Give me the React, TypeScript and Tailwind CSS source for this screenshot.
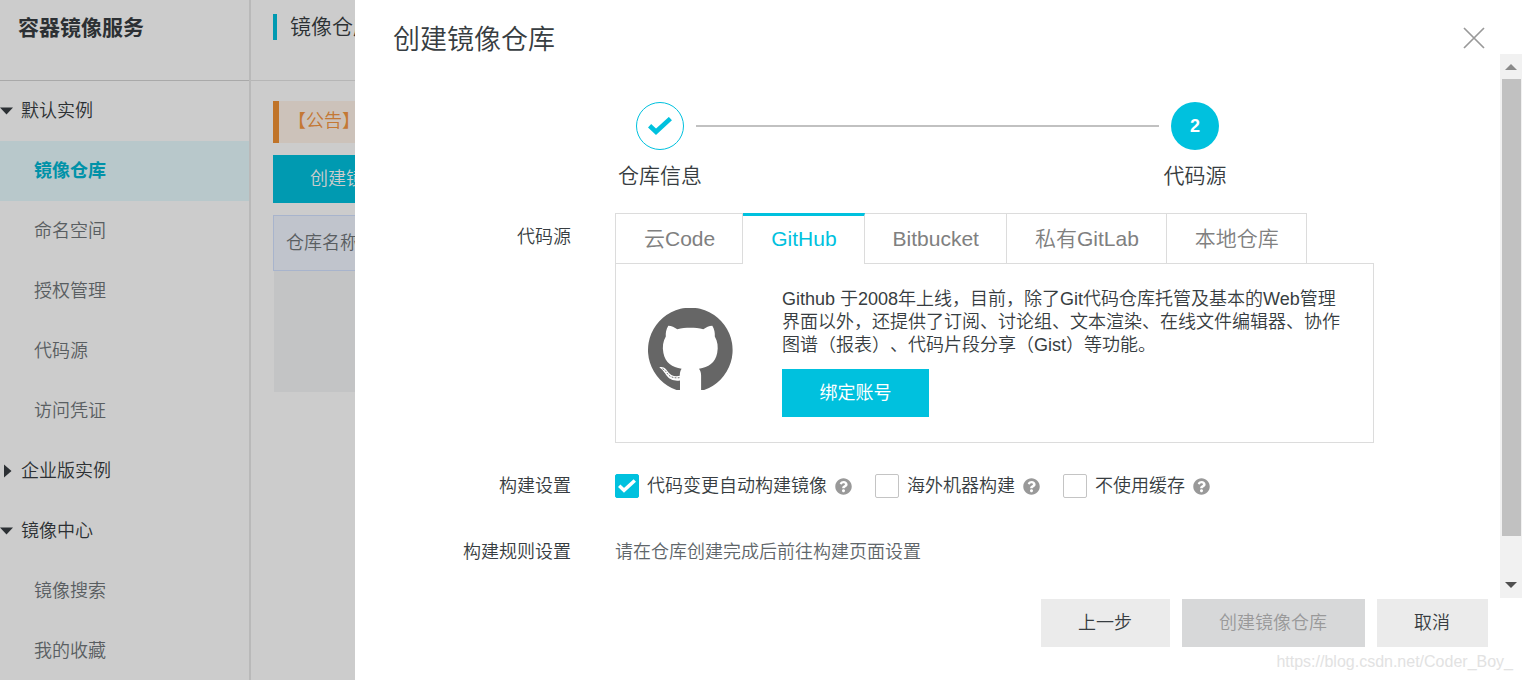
import { useState } from "react";
import type { ReactNode } from "react";
import { FaQuestionCircle } from "react-icons/fa";

type NavGroup = { title: string; open: boolean; items: string[] };

const navGroups: NavGroup[] = [
  { title: "默认实例", open: true, items: ["镜像仓库", "命名空间", "授权管理", "代码源", "访问凭证"] },
  { title: "企业版实例", open: false, items: [] },
  { title: "镜像中心", open: true, items: ["镜像搜索", "我的收藏"] },
];

const sources = ["云Code", "GitHub", "Bitbucket", "私有GitLab", "本地仓库"];

function Caret({ open }: { open: boolean }) {
  return (
    <svg className="h-[14px] w-[14px] shrink-0 fill-[#373d41]" viewBox="0 0 14 14" aria-hidden="true">
      {open ? <path d="M0 3.5H13L6.5 10.5Z" /> : <path d="M4 0.5V13.5L11.5 7Z" />}
    </svg>
  );
}

function Tick({ className }: { className: string }) {
  return (
    <svg className={className} viewBox="0 0 24 18" fill="none" stroke="currentColor" strokeWidth="4.6" aria-hidden="true">
      <path d="M1.6 8.8L8 14.8L22.4 1.6" />
    </svg>
  );
}

function OctocatMark({ className }: { className: string }) {
  return (
    <svg className={className} viewBox="0 0 85 83" aria-hidden="true">
      <path d="M28.5 82A42.3 42.3 0 1 1 56.1 82Z" fill="#666" />
      <path
        d="M20.3 17.8C23.5 18 26.5 19.4 29.3 21.2C33.5 20.2 38 19.8 42.3 19.8C46.6 19.8 51.1 20.2 55.3 21.2C58.1 19.4 61.1 18 64.3 17.8C66.6 21.5 67 25 66.8 28.5C69.6 33 70.4 39 69.2 45C67.2 55 60.5 59.2 51 60.7C52.4 62.6 53.1 64.6 53.1 67.5V82.6H32V72.4C28.8 72.9 25.8 72.6 23 71.2C17.6 68.6 16.8 62.6 11.3 59.4C13.6 58.5 16.2 59.3 18 61.2C20 63.4 20.9 65.6 23.4 67C26 68.4 29 68.5 31.8 67.8C31.8 64.8 32.2 62.6 33.6 60.7C24.1 59.2 17.4 55 15.4 45C14.2 39 15 33 17.8 28.5C17.6 25 18 21.5 20.3 17.8Z"
        fill="#fff"
      />
      <path d="M14.5 60.8C18.8 62.5 18.8 67 23.2 68.8C26 70 29 70 32 69.6" fill="none" stroke="#666" strokeWidth="0.9" strokeDasharray="1.8 1.3" />
    </svg>
  );
}

function Sidebar() {
  return (
    <aside className="w-[251px] shrink-0 border-r-2 border-[#e8e8e8]">
      <h1 className="flex h-[81px] items-start border-b border-[#d4d4d4] pt-[14px] pl-[18px] text-[21px] leading-7 font-bold text-[#373d41]">
        容器镜像服务
      </h1>
      <nav>
        {navGroups.map((group) => (
          <div key={group.title}>
            <button type="button" className="flex h-[60px] w-full items-center gap-[7px] text-lg text-[#373d41]">
              <Caret open={group.open} />
              {group.title}
            </button>
            {group.items.map((item) => (
              <a
                key={item}
                href="#"
                className={
                  item === "镜像仓库"
                    ? "flex h-[60px] items-center bg-[#e6fafe] pl-[34px] text-lg font-bold text-[#00b7d3]"
                    : "flex h-[60px] items-center pl-[34px] text-lg text-[#70767a]"
                }
              >
                {item}
              </a>
            ))}
          </div>
        ))}
      </nav>
    </aside>
  );
}

function RepositoryPage() {
  return (
    <main className="min-w-0 flex-1">
      <header className="h-[81px] border-b border-[#e4e4e4] pt-[14px] pl-[22px]">
        <h2 className="border-l-4 border-[#00c1de] pl-[13px] text-[21px] leading-[26px] text-[#373d41]">镜像仓库</h2>
      </header>
      <div className="flex flex-col items-start gap-3 pt-5 pl-[22px]">
        <p className="h-[42px] w-full border-l-6 border-[#f09234] bg-[#fff3e9] pl-[9px] text-lg leading-10 text-[#f59642]">
          【公告】
        </p>
        <button type="button" className="h-12 bg-[#00c1de] px-[37px] text-lg text-white">
          创建镜像仓库
        </button>
        <table className="w-full border-collapse text-left text-lg">
          <thead>
            <tr className="h-[55px] border border-[#d3e2ff] bg-[#f1f5ff]">
              <th className="pl-3 font-[350] text-[#70767a]">仓库名称</th>
            </tr>
          </thead>
          <tbody>
            <tr className="h-[121px] bg-[#f4f5f7]">
              <td />
            </tr>
          </tbody>
        </table>
      </div>
    </main>
  );
}

function Steps() {
  return (
    <ol className="mx-auto grid w-[619px] max-w-full grid-cols-[84px_1fr_84px] text-[21px] text-[#373d41]">
      <li className="flex flex-col items-center gap-2.5">
        <span className="flex size-12 items-center justify-center rounded-full border border-[#00c1de] text-[#00c1de]">
          <Tick className="h-[18px] w-6" />
        </span>
        <span className="leading-8">仓库信息</span>
      </li>
      <li aria-hidden="true" className="-mx-1.5 mt-[23px] h-0.5 bg-[#c1c1c1]" />
      <li className="flex flex-col items-center gap-2.5">
        <span className="flex size-12 items-center justify-center rounded-full bg-[#00c1de] text-lg font-bold text-white">2</span>
        <span className="leading-8">代码源</span>
      </li>
    </ol>
  );
}

function SourceTabs() {
  const [active, setActive] = useState("GitHub");
  return (
    <div>
      <div role="tablist" className="flex border-l border-[#dcdcdc]">
        {sources.map((source) => (
          <button
            key={source}
            type="button"
            role="tab"
            aria-selected={source === active}
            onClick={() => setActive(source)}
            className={
              source === active
                ? "h-[51px] border-t-3 border-r border-t-[#00c1de] border-r-[#dcdcdc] pr-[27px] pb-0.5 pl-7 text-[21px] whitespace-nowrap text-[#00c1de]"
                : "h-[51px] border-t border-r border-b border-[#dcdcdc] pt-0.5 pr-[27px] pl-7 text-[21px] whitespace-nowrap text-[#808080]"
            }
          >
            {source}
          </button>
        ))}
        <span className="-ml-px h-[51px] flex-1 border-b border-[#dcdcdc]" />
      </div>
      <div role="tabpanel" className="flex h-[179px] border-x border-b border-[#dcdcdc] pr-7 pl-8">
        <OctocatMark className="mt-11 h-[83px] w-[85px] shrink-0" />
        <div className="ml-[49px] pt-6">
          <p className="text-lg leading-[23px] text-[#373d41] [text-spacing-trim:space-all]">
            Github 于2008年上线，目前，除了Git代码仓库托管及基本的Web管理界面以外，还提供了订阅、讨论组、文本渲染、在线文件编辑器、协作图谱（报表）、代码片段分享（Gist）等功能。
          </p>
          <button type="button" className="mt-3 h-12 w-[147px] bg-[#00c1de] text-lg font-normal text-white">
            绑定账号
          </button>
        </div>
      </div>
    </div>
  );
}

function Option({ label, defaultChecked = false }: { label: string; defaultChecked?: boolean }) {
  return (
    <div className="flex items-center gap-2">
      <label className="flex items-center gap-2">
        <span className="grid size-6 place-items-center">
          <input
            type="checkbox"
            defaultChecked={defaultChecked}
            className="peer col-start-1 row-start-1 size-6 appearance-none rounded-xs border border-[#c4c4c4] bg-white checked:border-[#00c1de] checked:bg-[#00c1de]"
          />
          <Tick className="pointer-events-none col-start-1 row-start-1 hidden h-[14px] w-[18px] text-white peer-checked:block" />
        </span>
        {label}
      </label>
      <FaQuestionCircle className="size-[17px] text-[#999]" />
    </div>
  );
}

function Row({ label, children, className }: { label: string; children: ReactNode; className: string }) {
  return (
    <div className={className}>
      <div className="text-right leading-7">{label}</div>
      <div className="min-w-0">{children}</div>
    </div>
  );
}

function Scrollbar() {
  return (
    <div aria-hidden="true" className="flex w-[22px] shrink-0 flex-col items-center bg-[#f1f1f1]">
      <svg className="h-[25px] w-3" viewBox="0 0 12 25">
        <path d="M0 16H12L6 10Z" fill="#8a8a8a" />
      </svg>
      <div className="w-[19px] flex-[457] bg-[#c1c1c1]" />
      <div className="flex-[37]" />
      <svg className="h-[25px] w-3" viewBox="0 0 12 25">
        <path d="M0 9H12L6 15Z" fill="#505050" />
      </svg>
    </div>
  );
}

function CreateDrawer() {
  return (
    <section
      role="dialog"
      aria-label="创建镜像仓库"
      className="fixed inset-y-0 right-0 left-[355px] flex flex-col bg-white text-[#373d41]"
    >
      <header className="flex h-[54px] items-start justify-between pt-6 pr-9 pl-[38px]">
        <h2 className="text-[27px] leading-8">创建镜像仓库</h2>
        <button type="button" aria-label="关闭" className="mt-0.5">
          <svg className="size-6" viewBox="0 0 24 24" fill="none" stroke="#999" strokeWidth="1.7">
            <path d="M2 2L22 22M22 2L2 22" />
          </svg>
        </button>
      </header>
      <div className="flex min-h-0 flex-1">
        <div className="min-w-0 flex-1 overflow-hidden pt-12 text-lg">
          <Steps />
          <div className="mt-[21px] flex flex-col">
            <Row label="代码源" className="grid grid-cols-[216px_minmax(0,759px)] gap-11 [&>:first-child]:pt-[10px]">
              <SourceTabs />
            </Row>
            <Row label="构建设置" className="mt-[29px] grid grid-cols-[216px_minmax(0,759px)] gap-11">
              <div className="flex h-7 items-center gap-[23px]">
                <Option label="代码变更自动构建镜像" defaultChecked />
                <Option label="海外机器构建" />
                <Option label="不使用缓存" />
              </div>
            </Row>
            <Row label="构建规则设置" className="mt-[38px] grid grid-cols-[216px_minmax(0,759px)] gap-11">
              <p className="leading-7 text-[#60666a]">请在仓库创建完成后前往构建页面设置</p>
            </Row>
          </div>
        </div>
        <Scrollbar />
      </div>
      <footer className="flex h-[82px] items-start justify-end gap-3 pt-px pr-[34px] text-lg">
        <button type="button" className="h-12 bg-[#ebebeb] pr-[38px] pl-[37px]">上一步</button>
        <button type="button" disabled className="h-12 bg-[#d7d8d9] pr-[38px] pl-[37px] text-[#999]">创建镜像仓库</button>
        <button type="button" className="h-12 bg-[#ebebeb] pr-[38px] pl-[37px]">取消</button>
      </footer>
      <span className="absolute right-[9px] bottom-1.5 text-base text-[#e2e2e2]">https://blog.csdn.net/Coder_Boy_</span>
    </section>
  );
}

export default function App() {
  return (
    <div className="flex h-screen overflow-hidden bg-white font-['Liberation_Sans','Noto_Sans_CJK_SC',sans-serif] font-[350]">
      <Sidebar />
      <RepositoryPage />
      <div className="fixed inset-0 bg-black/20" />
      <CreateDrawer />
    </div>
  );
}
